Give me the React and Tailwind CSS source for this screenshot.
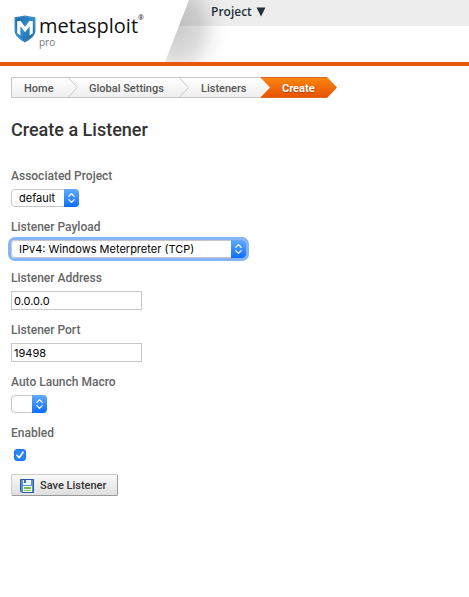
import React from "react";

function Shield() {
  return (
    <svg viewBox="0 0 22 28" className="h-7 w-[22px] shrink-0" aria-hidden="true">
      <defs>
        <linearGradient id="shield" x1="0" y1="0" x2="1" y2="1">
          <stop offset="0" stopColor="#16649f" />
          <stop offset="0.5" stopColor="#2f8dcc" />
          <stop offset="1" stopColor="#15598f" />
        </linearGradient>
      </defs>
      <path d="M.6 2.2Q6 1.6 11 .5Q16 1.6 21.4 2.2V15.5C21.4 21 16 24.5 11 27.5C6 24.5.6 21 .6 15.5Z" fill="url(#shield)" />
      <path d="M1.6 3.2Q6 2.6 11 1.5Q16 2.6 20.4 3.2V15.5C20.4 20.4 15.5 23.6 11 26.3C6.5 23.6 1.6 20.4 1.6 15.5Z" fill="none" stroke="#5c9fd0" strokeWidth="0.5" />
      <path d="M3.2 6H6.6L11 11.8L15.4 6H18.8V18.3L15.6 20.5V11.2L11 17.3L6.4 11.2V20.5L3.2 18.3Z" fill="#fff" />
    </svg>
  );
}

function Header() {
  return (
    <header className="relative h-[66px] border-b-4 border-[#ea5709] bg-white">
      <nav className="flex h-[26px] bg-[#ededed] pl-[211px]">
        <button
          type="button"
          className="relative z-10 flex h-6 items-center gap-1 font-['Open_Sans','Noto_Sans',sans-serif] text-xs font-semibold text-[#22323c]"
        >
          Project
          <svg viewBox="0 0 10 10" className="size-[10px]" aria-hidden="true">
            <path d="M.5.5H9.5L5 9.5Z" fill="#22323c" />
          </svg>
        </button>
      </nav>
      <div className="absolute left-0 top-0 h-[62px] w-[240px] bg-[radial-gradient(ellipse_50px_60px_at_177px_28px,rgba(0,0,0,0.19)_10%,rgba(0,0,0,0.14)_45%,rgba(0,0,0,0.04)_75%,transparent_100%)]" />
      <div className="absolute left-0 top-0 h-[62px] w-[189px] bg-white [clip-path:polygon(0_0,100%_0,165px_100%,0_100%)]">
        <a href="#home" aria-label="metasploit pro" className="flex gap-[3px] pl-[14px] pt-[15px]">
          <Shield />
          <span className="flex flex-col font-['Open_Sans','Noto_Sans',sans-serif]">
            <span className="flex h-5 text-xl leading-[22px] text-[#111]">
              metasploit<span className="text-[7px] leading-[6px]">®</span>
            </span>
            <span className="text-[10px] leading-3 text-[#777]">
              <span className="block pt-px">pro</span>
            </span>
          </span>
        </a>
      </div>
    </header>
  );
}

function Chevron() {
  return (
    <svg viewBox="0 0 10 19" className="h-[19px] w-[10px]" aria-hidden="true">
      <path d="M.5 0L9.5 9.5L.5 19" fill="none" stroke="#c8c8c8" />
    </svg>
  );
}

function Breadcrumbs() {
  return (
    <nav aria-label="Breadcrumb">
      <ol className="flex h-[21px] w-fit text-[11px] leading-[21px] font-medium text-[#555]">
        <li className="flex border-y border-l border-[#c8c8c8] bg-linear-to-b from-white to-[#eee] pl-3">
          <a href="#home" className="w-11">Home</a>
          <Chevron />
        </li>
        <li className="flex border-y border-[#c8c8c8] bg-linear-to-b from-white to-[#eee] pl-[11px]">
          <a href="#settings" className="w-[90px]">Global Settings</a>
          <Chevron />
        </li>
        <li className="flex border-y border-[#c8c8c8] bg-linear-to-b from-white to-[#eee] pl-3">
          <a href="#listeners" className="w-[69px]">Listeners</a>
        </li>
        <li
          aria-current="page"
          className="-ml-[10px] w-[77px] border-y border-[#d96820] bg-linear-to-b from-[#fa850f] to-[#e95002] pl-[22px] font-bold text-white [clip-path:polygon(0_0,67px_0,100%_50%,67px_100%,0_100%,10px_50%)] [text-shadow:0_1px_1px_#a94000]"
        >
          Create
        </li>
      </ol>
    </nav>
  );
}

function Select({ id, options, size, focused }) {
  return (
    <span className={`relative block h-[18px] ${size} rounded-[4px] ${focused ? "ring-3 ring-[#85b4f8]" : ""}`}>
      <select
        id={id}
        className="block h-full w-full appearance-none rounded-[4px] border border-[#c6c6c6] bg-white pl-[7px] pr-4 font-[Inter,sans-serif] text-[11px] leading-4 text-black outline-none"
      >
        {options.map((o) => (
          <option key={o}>{o}</option>
        ))}
      </select>
      <span className="pointer-events-none absolute inset-y-0 right-0 w-[15px] rounded-r-[4px] bg-linear-to-b from-[#62aafb] to-[#056bfd]">
        <svg viewBox="0 0 15 18" className="h-full w-full" aria-hidden="true">
          <path d="M4.8 7.3L7.5 4.6L10.2 7.3M4.8 10.7L7.5 13.4L10.2 10.7" fill="none" stroke="#fff" strokeWidth="1.2" strokeLinecap="round" strokeLinejoin="round" />
        </svg>
      </span>
    </span>
  );
}

function Field({ id, label, children }) {
  return (
    <div className="mb-[11px] flex flex-col items-start gap-1">
      <label htmlFor={id} className="text-xs leading-[18px] font-medium text-[#666]">
        {label}
      </label>
      {children}
    </div>
  );
}

function TextInput({ id, value }) {
  return (
    <input
      id={id}
      type="text"
      defaultValue={value}
      className="h-[19px] w-[131px] border border-[#c8c8c8] bg-white px-0.5 font-[Inter,sans-serif] text-[11px] text-black outline-none"
    />
  );
}

function Floppy() {
  return (
    <svg viewBox="0 0 14 14" className="size-[14px]" aria-hidden="true">
      <path d="M.5.5H13.5V13.5H2L.5 12Z" fill="#5b91d6" stroke="#2b58a5" />
      <rect x="3" y="1" width="8" height="5" fill="#eef5fc" />
      <rect x="4" y="1" width="2" height="3" fill="#3b70b8" />
      <rect x="3" y="7" width="9" height="6" fill="#f5faef" />
      <rect x="4" y="8" width="7" height="2" fill="#74b943" />
      <rect x="4" y="11" width="7" height="1" fill="#88c45c" />
    </svg>
  );
}

export default function App() {
  return (
    <div className="bg-white font-[Roboto,sans-serif]">
      <Header />
      <main className="px-[11px] pt-[11px]">
        <Breadcrumbs />
        <h1 className="mt-5 text-lg leading-6 font-medium text-[#333]">Create a Listener</h1>
        <form className="mt-[25px]" onSubmit={(e) => e.preventDefault()}>
          <Field id="project" label="Associated Project">
            <Select id="project" options={["default"]} size="w-[68px]" />
          </Field>
          <Field id="payload" label="Listener Payload">
            <Select id="payload" options={["IPv4: Windows Meterpreter (TCP)"]} size="w-[235px]" focused />
          </Field>
          <Field id="address" label="Listener Address">
            <TextInput id="address" value="0.0.0.0" />
          </Field>
          <Field id="port" label="Listener Port">
            <TextInput id="port" value="19498" />
          </Field>
          <Field id="macro" label="Auto Launch Macro">
            <Select id="macro" options={[""]} size="w-9" />
          </Field>
          <Field id="enabled" label="Enabled">
            <span className="relative mt-[3px] ml-[3px] block size-3">
              <input
                id="enabled"
                type="checkbox"
                defaultChecked
                className="peer block size-full appearance-none rounded-[3px] border border-[#aaa] bg-white checked:border-[#1673f5] checked:bg-[#2c83fb]"
              />
              <svg viewBox="0 0 12 12" className="pointer-events-none absolute inset-0 hidden size-full peer-checked:block" aria-hidden="true">
                <path d="M3 6.3L5.2 8.7L9 3.2" fill="none" stroke="#fff" strokeWidth="1.6" strokeLinecap="round" strokeLinejoin="round" />
              </svg>
            </span>
          </Field>
          <button
            type="submit"
            className="mt-[13px] flex h-[22px] items-center gap-[6px] rounded-[2px] border border-[#ccc] border-r-[#999] border-b-[#999] bg-linear-to-b from-[#fafafa] to-[#dedede] pt-0.5 pr-[11px] pl-2 text-[11px] font-medium text-[#333]"
          >
            <Floppy />
            Save Listener
          </button>
        </form>
      </main>
    </div>
  );
}
